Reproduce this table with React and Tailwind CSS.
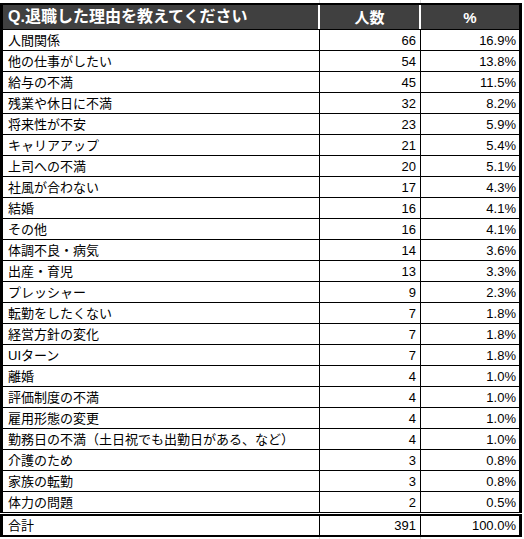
const rows = [
  ["人間関係", 66, "16.9%"],
  ["他の仕事がしたい", 54, "13.8%"],
  ["給与の不満", 45, "11.5%"],
  ["残業や休日に不満", 32, "8.2%"],
  ["将来性が不安", 23, "5.9%"],
  ["キャリアアップ", 21, "5.4%"],
  ["上司への不満", 20, "5.1%"],
  ["社風が合わない", 17, "4.3%"],
  ["結婚", 16, "4.1%"],
  ["その他", 16, "4.1%"],
  ["体調不良・病気", 14, "3.6%"],
  ["出産・育児", 13, "3.3%"],
  ["プレッシャー", 9, "2.3%"],
  ["転勤をしたくない", 7, "1.8%"],
  ["経営方針の変化", 7, "1.8%"],
  ["UIターン", 7, "1.8%"],
  ["離婚", 4, "1.0%"],
  ["評価制度の不満", 4, "1.0%"],
  ["雇用形態の変更", 4, "1.0%"],
  ["勤務日の不満（土日祝でも出勤日がある、など）", 4, "1.0%"],
  ["介護のため", 3, "0.8%"],
  ["家族の転勤", 3, "0.8%"],
  ["体力の問題", 2, "0.5%"],
]

const Row = ({ label, count, pct }) => {
  return (
    <div className="flex h-[21px] border-b border-black text-[13px] leading-none">
      <div className="w-[317px] border-r border-black flex items-center pl-[5px] whitespace-nowrap">{label}</div>
      <div className="w-[101px] border-r border-black flex items-center justify-end pr-[4px]">{count}</div>
      <div className="flex-1 flex items-center justify-end pr-[3px]">{pct}</div>
    </div>
  )
}

const App = () => {
  return (
    <div
      className="w-[524px] h-[539px] bg-white text-black overflow-hidden"
      style={{ fontFamily: '"Liberation Sans", "Noto Sans CJK JP", sans-serif' }}
    >
      {/* gridline strip above the table */}
      <div className="flex h-[3px] w-[522px]">
        <div className="w-[320px] border-r border-[#d9d9d9]"></div>
        <div className="w-[101px] border-r border-[#d9d9d9]"></div>
      </div>

      <div className="w-[522px] border-x-[3px] border-t-[2px] border-black">
        <div className="flex h-[25px] bg-[#404040] text-white font-bold border-b border-black leading-none">
          <div className="w-[317px] border-r-2 border-white flex items-center pl-[5px] text-[16px] whitespace-nowrap">
            Q.退職した理由を教えてください
          </div>
          <div className="w-[101px] border-r-2 border-white flex items-center justify-center text-[15px]">人数</div>
          <div className="flex-1 flex items-center justify-center text-[15px]">%</div>
        </div>
        {rows.map(([label, count, pct]) => (
          <Row key={label} label={label} count={count} pct={pct} />
        ))}
      </div>

      <div className="w-[522px] mt-px flex h-[23px] border-y-2 border-x-[3px] border-black text-[13px] leading-none">
        <div className="w-[317px] border-r border-black flex items-center pl-[5px]">合計</div>
        <div className="w-[101px] border-r border-black flex items-center justify-end pr-[4px]">391</div>
        <div className="flex-1 flex items-center justify-end pr-[3px]">100.0%</div>
      </div>

      {/* gridline strip below the table */}
      <div className="flex h-[4px] w-[522px]">
        <div className="w-[320px] border-r border-[#d9d9d9]"></div>
        <div className="w-[101px] border-r border-[#d9d9d9]"></div>
      </div>
    </div>
  )
}

export default App
